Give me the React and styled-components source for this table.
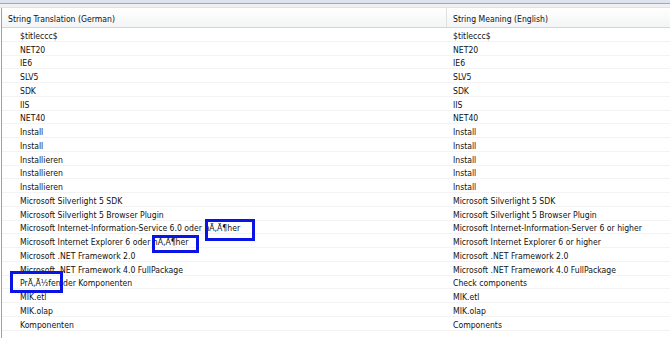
import React from 'react'
import styled, { createGlobalStyle } from 'styled-components'

const GlobalStyle = createGlobalStyle`
  html, body {
    margin: 0;
    padding: 0;
    background: #ffffff;
  }
  body {
    font-family: "DejaVu Sans Condensed", "DejaVu Sans", sans-serif;
    font-size: 8.6px;
    color: #111111;
  }
`

const Window = styled.div`
  width: 670px;
  height: 338px;
  overflow: hidden;
  position: relative;
  display: flex;
  flex-direction: column;
  background: #ffffff;
`

const TopBand = styled.div`
  height: 3px;
  background: #dde3ef;
  border-bottom: 1px solid #a6a9ae;
  flex-shrink: 0;
`

const Gap = styled.div`
  height: 3px;
  background: #f0f0f0;
  border-bottom: 1px solid #e2e2e2;
  flex-shrink: 0;
`

const Grid = styled.div`
  flex: 1;
  margin-left: 1px;
  border-left: 1px solid #a0a0a0;
  display: flex;
  flex-direction: column;
`

const HeaderRow = styled.div`
  display: grid;
  grid-template-columns: 444px 1fr;
  height: 19px;
  background: linear-gradient(#ffffff, #f3f4f5);
  border-bottom: 1px solid #d5d5d5;
  flex-shrink: 0;
`

const HeaderCell = styled.div`
  display: flex;
  align-items: center;
  padding-top: 3px;
  padding-left: ${p => p.$indent}px;
  border-left: ${p => (p.$divider ? '1px solid #e0e0e0' : 'none')};
  white-space: nowrap;
`

const Row = styled.div`
  display: grid;
  grid-template-columns: 444px 1fr;
  height: 13.75px;
  border-bottom: 1px solid #f3f3f3;
  box-sizing: border-box;
  flex-shrink: 0;
`

const Cell = styled.div`
  display: flex;
  align-items: center;
  padding-top: 3px;
  padding-left: ${p => p.$indent}px;
  white-space: nowrap;
  overflow: hidden;
`

const Mark = styled.div`
  position: absolute;
  box-sizing: border-box;
  border: 3px solid #0a14e6;
`

const rows = [
  ['$titleccc$', '$titleccc$'],
  ['NET20', 'NET20'],
  ['IE6', 'IE6'],
  ['SLV5', 'SLV5'],
  ['SDK', 'SDK'],
  ['IIS', 'IIS'],
  ['NET40', 'NET40'],
  ['Install', 'Install'],
  ['Install', 'Install'],
  ['Installieren', 'Install'],
  ['Installieren', 'Install'],
  ['Installieren', 'Install'],
  ['Microsoft Silverlight 5 SDK', 'Microsoft Silverlight 5 SDK'],
  ['Microsoft Silverlight 5 Browser Plugin', 'Microsoft Silverlight 5 Browser Plugin'],
  ['Microsoft Internet-Information-Service 6.0 oder hÄ‚Ä¶her', 'Microsoft Internet-Information-Server 6 or higher'],
  ['Microsoft Internet Explorer 6 oder hÄ‚Ä¶her', 'Microsoft Internet Explorer 6 or higher'],
  ['Microsoft .NET Framework 2.0', 'Microsoft .NET Framework 2.0'],
  ['Microsoft .NET Framework 4.0 FullPackage', 'Microsoft .NET Framework 4.0 FullPackage'],
  ['PrÄ‚Ä½fen der Komponenten', 'Check components'],
  ['MIK.etl', 'MIK.etl'],
  ['MIK.olap', 'MIK.olap'],
  ['Komponenten', 'Components'],
]

const marks = [
  { left: 205, top: 219, width: 50, height: 22 },
  { left: 152, top: 235, width: 47, height: 18 },
  { left: 10, top: 271, width: 53, height: 22 },
]

const App = () => {
  return (
    <Window>
      <GlobalStyle />
      <TopBand />
      <Gap />
      <Grid>
        <HeaderRow>
          <HeaderCell $indent={6}>String Translation (German)</HeaderCell>
          <HeaderCell $indent={6} $divider>String Meaning (English)</HeaderCell>
        </HeaderRow>
        {rows.map(([de, en], i) => (
          <Row key={i}>
            <Cell $indent={18}>{de}</Cell>
            <Cell $indent={7}>{en}</Cell>
          </Row>
        ))}
      </Grid>
      {marks.map((m, i) => (
        <Mark key={i} style={m} />
      ))}
    </Window>
  )
}

export default App
